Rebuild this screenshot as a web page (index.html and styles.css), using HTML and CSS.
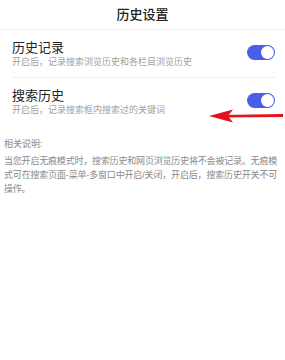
FILE: index.html
```html
<!DOCTYPE html>
<html lang="zh">
<head>
<meta charset="utf-8">
<link rel="stylesheet" href="styles.css">
</head>
<body>
<div class="page">
  <header class="header">历史设置</header>
  <div class="row row-first">
    <div class="text">
      <div class="label">历史记录</div>
      <div class="desc">开启后，记录搜索浏览历史和各栏目浏览历史</div>
    </div>
    <div class="toggle"><span class="knob"></span></div>
  </div>
  <div class="row row-second">
    <div class="text">
      <div class="label">搜索历史</div>
      <div class="desc">开启后，记录搜索框内搜索过的关键词</div>
    </div>
    <div class="toggle"><span class="knob"></span></div>
  </div>
  <div class="notes">
    <div class="notes-title">相关说明:</div>
    <p class="notes-text">当您开启无痕模式时，搜索历史和网页浏览历史将不会被记录。无痕模式可在搜索页面-菜单-多窗口中开启/关闭，开启后，搜索历史开关不可操作。</p>
  </div>
  <svg class="arrow" width="76" height="16" viewBox="0 0 76 16">
    <path d="M12 7 L74 6 L74 9 L12 9.5 Z" fill="#e3141b"/>
    <path d="M0 8 L24 1.5 L19 8 L24 14.5 Z" fill="#e3141b"/>
  </svg>
</div>
</body>
</html>
```
FILE: styles.css
```css
html, body {
  margin: 0;
  padding: 0;
  background: #fff;
}
body {
  font-family: "Liberation Sans", "Noto Sans CJK SC", sans-serif;
  color: #222;
}
.page {
  position: relative;
  width: 285px;
  height: 360px;
  overflow: hidden;
}
.header {
  height: 29px;
  line-height: 29px;
  text-align: center;
  font-size: 13px;
  font-weight: 500;
  color: #222;
  border-bottom: 1px solid #efefef;
}
.row {
  display: flex;
  align-items: flex-start;
  justify-content: space-between;
  padding: 10px 10px 9px 12px;
}
.row-first {
  border-bottom: 1px solid #efefef;
  margin: 0 10px 0 12px;
  padding-left: 0;
  padding-right: 0;
}
.label {
  font-size: 13px;
  line-height: 15px;
  color: #222;
}
.desc {
  margin-top: 1px;
  font-size: 9px;
  line-height: 12px;
  color: #a0a0a0;
}
.toggle {
  margin-top: 5px;
  width: 28px;
  height: 15px;
  border-radius: 8px;
  background: #4a5fe3;
  position: relative;
  flex: none;
}
.knob {
  position: absolute;
  right: 1px;
  top: 1px;
  width: 13px;
  height: 13px;
  border-radius: 50%;
  background: #fff;
}
.notes {
  padding: 13px 8px 0 4px;
}
.notes-title {
  font-size: 9px;
  line-height: 12px;
  color: #8a8a8a;
}
.notes-text {
  margin: 4px 0 0;
  font-size: 9px;
  letter-spacing: -0.25px;
  line-height: 14px;
  color: #8a8a8a;
  text-align: justify;
}
.arrow {
  position: absolute;
  left: 209px;
  top: 108px;
}
```
